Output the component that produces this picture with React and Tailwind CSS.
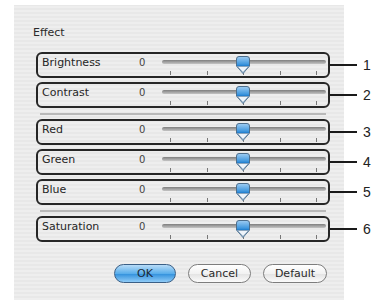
import React from "react";

const rows = [
  { label: "Brightness", n: "1" },
  { label: "Contrast", n: "2" },
  { label: "Red", n: "3", sep: true },
  { label: "Green", n: "4" },
  { label: "Blue", n: "5" },
  { label: "Saturation", n: "6", sep: true },
];

const Slider = () => (
  <svg width="166" height="24" viewBox="0 0 166 24" className="shrink-0">
    <defs>
      <linearGradient id="trk" x1="0" y1="0" x2="0" y2="1">
        <stop offset="0" stopColor="#7e7e7e" />
        <stop offset="1" stopColor="#c4c4c4" />
      </linearGradient>
      <linearGradient id="thm" x1="0" y1="0" x2="0" y2="1">
        <stop offset="0" stopColor="#9fcdf3" />
        <stop offset="0.45" stopColor="#3f97de" />
        <stop offset="0.55" stopColor="#1f7ccc" />
        <stop offset="1" stopColor="#7dbdf0" />
      </linearGradient>
    </defs>
    <rect x="2" y="5" width="164" height="4" rx="2" fill="url(#trk)" />
    {[10, 47, 83, 120, 156].map((x) => (
      <line key={x} x1={x + 0.5} y1="16" x2={x + 0.5} y2="20" stroke="#777" strokeWidth="1" />
    ))}
    <path
      d="M76.5 4 Q76.5 1.5 79 1.5 L87 1.5 Q89.5 1.5 89.5 4 L89.5 11 L83 18.5 L76.5 11 Z"
      fill="url(#thm)"
      stroke="#4d6e8c"
      strokeWidth="1"
    />
    <path d="M77.5 11.5 L83 17.5 L88.5 11.5 Z" fill="#eef4fa" stroke="#8aa0b4" strokeWidth="0.8" />
  </svg>
);

const Row = ({ label, n }) => (
  <div className="flex w-[340px] items-center">
    <div className="flex h-[26px] w-[294px] shrink-0 items-start rounded-[6px] border-2 border-[#262626] pl-[4px] pt-[1px]">
      <div className="w-[97px] pt-[0.5px] text-[11px] leading-[14px] text-[#262626]">{label}</div>
      <div className="w-[21px] pt-[0.5px] text-[10px] leading-[13px] text-[#444]">0</div>
      <Slider />
    </div>
    <div className="h-[1.5px] w-[27px] shrink-0 bg-[#1a1a1a]" />
    <div className="ml-[6px] shrink-0 font-['Liberation_Sans',sans-serif] text-[14px] leading-[14px] text-[#222]">{n}</div>
  </div>
);

const AquaButton = ({ children, primary, w }) => (
  <button
    className={
      primary
        ? `flex h-[19px] ${w} items-center justify-center rounded-full border border-[#3a5f86] bg-[linear-gradient(#b8dcf8,#5aaeeb_50%,#2f8fdc_51%,#8fcbf7)] text-[11px] leading-none text-[#1c2a38]`
        : `flex h-[19px] ${w} items-center justify-center rounded-full border border-[#7d7d7d] bg-[linear-gradient(#ffffff,#f2f2f2_50%,#e2e2e2_51%,#fbfbfb)] text-[11px] leading-none text-[#2a2a2a]`
    }
  >
    {children}
  </button>
);

export default function App() {
  return (
    <div className="h-[304px] w-[373px] overflow-hidden bg-white pl-[14px] pt-[5px] font-['DejaVu_Sans',sans-serif]">
      <div className="h-[295px] w-[330px] bg-[repeating-linear-gradient(0deg,#eeeeee_0px,#eeeeee_2px,#e8e8e8_2px,#e8e8e8_4px)] pl-[22px] pt-[21px]">
        <div className="ml-[-3px] text-[11px] leading-[14px] text-[#2a2a2a]">Effect</div>
        <div className="mt-[12px] flex flex-col">
          {rows.map((r, i) => (
            <div key={r.label} className={i === 0 ? "" : r.sep ? "mt-[5px]" : "mt-[4px]"}>
              {r.sep && <div className="mb-[4px] ml-[4px] h-[2px] w-[286px] bg-[#b9b9b9]" />}
              <Row label={r.label} n={r.n} />
            </div>
          ))}
        </div>
        <div className="ml-[78px] mt-[22px] flex gap-[12px]">
          <AquaButton primary w="w-[62px]">OK</AquaButton>
          <AquaButton w="w-[63px]">Cancel</AquaButton>
          <AquaButton w="w-[64px]">Default</AquaButton>
        </div>
      </div>
    </div>
  );
}
